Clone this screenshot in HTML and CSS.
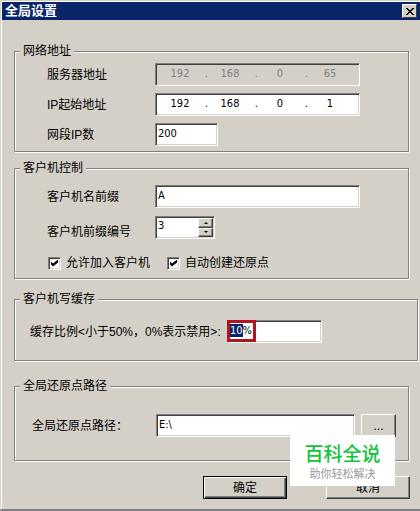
FILE: index.html
```html
<!DOCTYPE html>
<html lang="zh-CN">
<head>
    <meta charset="UTF-8">
    <meta name="viewport" content="width=device-width, initial-scale=1.0">
    <title>全局设置</title>
    <link rel="stylesheet" href="styles.css">
</head>
<body>
    <div class="window">
        <header class="title-bar">
            <h1>全局设置</h1>
            <button type="button" class="close-btn" aria-label="关闭">
                <svg width="8" height="7" viewBox="0 0 8 7" shape-rendering="crispEdges">
                    <path d="M0 0h2v1h1v1h2v-1h1v-1h2v1h-1v1h-1v1h-1v1h1v1h1v1h1v1h-2v-1h-1v-1h-2v1h-1v1h-2v-1h1v-1h1v-1h1v-1h-1v-1h-1v-1h-1z"/>
                </svg>
            </button>
        </header>

        <form class="settings">
            <fieldset class="group network">
                <legend>网络地址</legend>
                <div class="row">
                    <label for="server-ip">服务器地址</label>
                    <div class="field ip disabled">
                        <input id="server-ip" type="text" value="192" disabled><span>.</span>
                        <input type="text" value="168" aria-label="服务器地址 2" disabled><span>.</span>
                        <input type="text" value="0" aria-label="服务器地址 3" disabled><span>.</span>
                        <input type="text" value="65" aria-label="服务器地址 4" disabled>
                    </div>
                </div>
                <div class="row">
                    <label for="start-ip">IP起始地址</label>
                    <div class="field ip">
                        <input id="start-ip" type="text" value="192"><span>.</span>
                        <input type="text" value="168" aria-label="IP起始地址 2"><span>.</span>
                        <input type="text" value="0" aria-label="IP起始地址 3"><span>.</span>
                        <input type="text" value="1" aria-label="IP起始地址 4">
                    </div>
                </div>
                <div class="row">
                    <label for="ip-count">网段IP数</label>
                    <input id="ip-count" class="field short" type="text" value="200">
                </div>
            </fieldset>

            <fieldset class="group client">
                <legend>客户机控制</legend>
                <div class="row">
                    <label for="prefix">客户机名前缀</label>
                    <input id="prefix" class="field" type="text" value="A">
                </div>
                <div class="row row-low">
                    <label for="prefix-no">客户机前缀编号</label>
                    <div class="field spin">
                        <input id="prefix-no" type="number" value="3">
                        <div class="spin-btns">
                            <button type="button" class="up" aria-label="增加"></button>
                            <button type="button" class="down" aria-label="减少"></button>
                        </div>
                    </div>
                </div>
                <div class="checks">
                    <label><input type="checkbox" checked>允许加入客户机</label>
                    <label><input type="checkbox" checked>自动创建还原点</label>
                </div>
            </fieldset>

            <fieldset class="group cache">
                <legend>客户机写缓存</legend>
                <div class="row">
                    <label for="ratio">缓存比例&lt;小于50%，0%表示禁用&gt;:</label>
                    <div class="ratio">
                        <input id="ratio" class="field" type="text" value="10%">
                        <span class="mark"></span>
                    </div>
                </div>
            </fieldset>

            <fieldset class="group path">
                <legend>全局还原点路径</legend>
                <div class="row">
                    <label for="path">全局还原点路径：</label>
                    <input id="path" class="field" type="text" value="E:\">
                    <button type="button" class="btn browse">...</button>
                </div>
            </fieldset>

            <div class="actions">
                <button type="submit" class="btn default">确定</button>
                <button type="button" class="btn">取消</button>
            </div>
        </form>

        <div class="watermark">
            <strong>百科全说</strong>
            <span>助你轻松解决</span>
        </div>
    </div>

    <script>
        const ratio = document.getElementById('ratio');
        ratio.focus();
        ratio.setSelectionRange(0, 2);
    </script>
</body>
</html>
```
FILE: styles.css
```css
* {
    box-sizing: border-box;
}
body {
    margin: 0;
    background-color: #d4d0c8;
    font-family: "Liberation Sans", "Noto Sans CJK SC", sans-serif;
    font-size: 12px;
    line-height: 14px;
    color: #000;
}
input, button {
    font: inherit;
    color: inherit;
    margin: 0;
    padding: 0;
    border: none;
    border-radius: 0;
    outline: none;
}
.window {
    position: relative;
    min-height: 100vh;
    padding: 1px 0 0 1px;
    border: 1px solid #d4d0c8;
    border-right: none;
    border-bottom: 2px solid #808080;
    box-shadow: inset 1px 1px #fff;
}
.title-bar {
    display: flex;
    align-items: center;
    justify-content: space-between;
    height: 18px;
    padding: 0 3px;
    background-color: #0a246a;
    color: #fff;
}
.title-bar h1 {
    margin: 0;
    font-size: 13px;
    line-height: 18px;
}
.close-btn {
    display: flex;
    align-items: center;
    justify-content: center;
    width: 15px;
    height: 14px;
    background-color: #d4d0c8;
    border: 1px solid;
    border-color: #fff #404040 #404040 #fff;
}
.settings {
    padding: 24px 10px 8px 12px;
}

/* groups */
.group {
    min-width: 0;
    margin: 0 1px 0 0;
    padding: 0;
    border: 1px solid #808080;
    box-shadow: 1px 1px #fff, inset 1px 1px #fff;
}
.group legend {
    margin-left: 5px;
    padding: 0 3px;
    background-color: #d4d0c8;
}
.network {
    padding-bottom: 5px;
    margin-bottom: 9px;
}
.client {
    padding-bottom: 8px;
    margin-bottom: 13px;
}
.cache {
    padding-bottom: 17px;
    margin-right: -8px;
    margin-bottom: 18px;
}
.path {
    padding-bottom: 23px;
    margin-bottom: 15px;
}

/* rows */
.row {
    display: flex;
    align-items: center;
    padding: 0 48px 0 32px;
}
.network .row {
    padding-top: 5px;
}
.network .row + .row {
    padding-top: 7px;
}
.client .row {
    padding-top: 10px;
}
.client .row + .row {
    padding-top: 8px;
}
.cache .row {
    padding: 14px 95px 0 15px;
}
.path .row {
    padding: 21px 12px 0 17px;
}
.row > label {
    flex: none;
    width: 108px;
    white-space: nowrap;
}
.row-low {
    align-items: flex-end;
}
.cache .row > label {
    width: 197px;
}
.path .row > label {
    width: 124px;
}

/* fields */
.field {
    flex: 1;
    min-width: 0;
    width: 100%;
    height: 23px;
    padding: 0 2px 2px 2px;
    background-color: #fff;
    border: 1px solid;
    border-color: #808080 #fff #fff #808080;
    box-shadow: inset 1px 1px #404040, inset -1px -1px #d4d0c8;
    font-family: "DejaVu Sans Condensed", "DejaVu Sans", sans-serif;
    font-size: 11px;
}
.field input {
    min-width: 0;
    background: none;
}
.short {
    flex: none;
    width: 63px;
}
.ip {
    display: flex;
    align-items: center;
}
.ip input {
    width: 44px;
    text-align: center;
}
.ip span {
    width: 6px;
    text-align: right;
}
.disabled {
    background-color: #d4d0c8;
    color: #808080;
}
.spin {
    display: flex;
    flex: none;
    width: 60px;
    padding: 1px 1px 1px 2px;
}
.spin input {
    flex: 1;
    padding-bottom: 3px;
    appearance: textfield;
}
.spin input::-webkit-inner-spin-button {
    display: none;
}
.spin-btns {
    display: flex;
    flex-direction: column;
    width: 15px;
}
.spin-btns button {
    display: flex;
    align-items: center;
    justify-content: center;
    flex: 1;
    background-color: #d4d0c8;
    border: 1px solid;
    border-color: #fff #404040 #404040 #fff;
    box-shadow: inset -1px -1px #808080;
}
.spin-btns button::before {
    content: "";
    border: 2px solid transparent;
}
.spin-btns .up::before {
    border-top: none;
    border-bottom-color: #000;
}
.spin-btns .down::before {
    border-bottom: none;
    border-top-color: #000;
}
.checks {
    display: flex;
    gap: 16px;
    margin-top: 17px;
    padding-left: 32px;
}
.checks label {
    display: flex;
    align-items: center;
    white-space: nowrap;
}
.checks input {
    width: 13px;
    height: 13px;
    margin: 0 5px 0 1px;
    appearance: none;
    background-color: #fff;
    border: 1px solid;
    border-color: #808080 #fff #fff #808080;
    box-shadow: inset 1px 1px #404040, inset -1px -1px #d4d0c8;
}
.checks input:checked::before {
    content: "";
    display: block;
    width: 7px;
    height: 7px;
    margin: 2px;
    background-color: #000;
    clip-path: polygon(0 29%, 29% 57%, 100% 0, 100% 43%, 29% 100%, 0 71%);
}
.ratio {
    position: relative;
    display: flex;
    flex: 1;
}
.ratio .field {
    caret-color: transparent;
}
.ratio .field::selection {
    background-color: #0a246a;
    color: #fff;
}
.mark {
    position: absolute;
    top: 0;
    left: 0;
    width: 29px;
    height: 22px;
    border: 3px solid #b4141c;
    pointer-events: none;
}

/* buttons */
.btn {
    width: 84px;
    height: 23px;
    background-color: #d4d0c8;
    border: 1px solid;
    border-color: #fff #404040 #404040 #fff;
    box-shadow: inset -1px -1px #808080;
}
.default {
    border-color: #000;
    box-shadow: inset 1px 1px #fff, inset -1px -1px #404040, inset -2px -2px #808080;
}
.browse {
    flex: none;
    width: 35px;
    margin-left: 6px;
}
.actions {
    display: flex;
    justify-content: flex-end;
    gap: 39px;
}

.watermark {
    position: absolute;
    right: 25px;
    bottom: 23px;
    display: flex;
    flex-direction: column;
    align-items: center;
    width: 105px;
    height: 51px;
    padding-top: 9px;
    background-color: #fff;
}
.watermark strong {
    font-size: 19px;
    font-weight: 500;
    line-height: 22px;
    color: #10c43c;
}
.watermark span {
    font-size: 11px;
    line-height: 16px;
    color: #999;
}
```
